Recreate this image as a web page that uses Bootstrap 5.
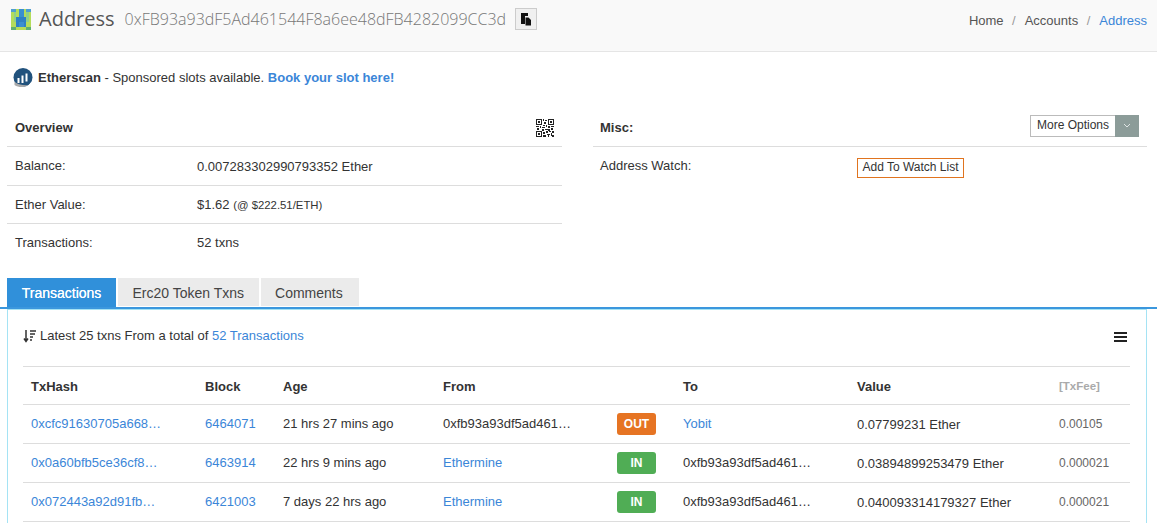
<!DOCTYPE html>
<html lang="en">
<head>
<meta charset="utf-8">
<title>Address</title>
<link href="https://cdn.jsdelivr.net/npm/bootstrap@5.3.0/dist/css/bootstrap.min.css" rel="stylesheet">
<style>
html,body{height:523px;overflow:hidden}
body{font-family:"Liberation Sans",Arial,sans-serif;font-size:13px;color:#333;background:#fff}
a{text-decoration:none;color:#3b86d8}
.top-band{height:52px;background:#f9f9f9;border-bottom:1px solid #e5e5e5;padding:0 10px 13px 11px}
.page-title{font-family:"Open Sans",sans-serif;font-size:20px;font-weight:400;color:#555;margin:0 0 0 8px;line-height:36px}
.addr-hash{font-family:"Open Sans",sans-serif;font-size:16px;font-weight:300;color:#777;margin-left:10px}
.copy-btn{width:22px;height:22px;border:1px solid #ccc;background:#f0f0f0;margin-left:9px;padding:0}
.crumbs{font-size:13px;color:#555;margin:3px 0 0}
.crumbs .sep{color:#999;margin:0 9px 0 8.5px}
.promo{padding:0 13px 4px;height:55px;font-size:13px}
.promo a{font-weight:700}
.promo-logo{margin-right:5px}
.ov-wrap{padding:0 10px 0 7px;gap:31px}
.ov-side{flex:0 0 555px}
.ov-side2{flex:1 1 0}
.ov-row{border-bottom:1px solid #ddd;padding:0 8px;height:38px}
.ov-row-first{height:39px}
.ov-val-low{padding-top:2px}
.ov-head{height:40px;padding-top:3px;font-weight:700;font-size:13px;color:#333}
.ov-side2 .ov-row{padding-left:7px}
.lab{width:182px;flex:none}
.lab2{width:257px;flex:none}
.more-group{height:22px;font-size:12px;font-weight:400;margin-bottom:5px}
.more-main{border:1px solid #bbb;border-right:0;background:#fff;padding:0 6px;height:22px;line-height:19px;color:#333}
.more-caret{width:24px;background:#8c9c99;height:22px}
.watch-row{height:38px;padding-left:7px}
.watch-btn{border:1px solid #e0741f;background:#fff;padding:0 4px;width:107px;height:20px;line-height:17px;font-size:12px;color:#333;margin-top:3px}
.tabs-row{padding:0 10px 0 7px;margin-top:16px;height:31px;border-bottom:2px solid #3b97dd;gap:2px;align-items:flex-start}
.tab-item{height:28px;line-height:30px;padding:0 14.5px;background:#ebebeb;color:#444;font-size:14px;display:block}
.tab-item.on{background:#3090da;color:#fff;text-shadow:0 0 .6px #fff;height:29px;width:109px;padding:0;text-align:center}
.tab-wide{width:98px}
.panel-box{margin:0 10px 0 7px;border:1px solid #a5e3f4;padding:0 15px;height:300px}
.panel-top{height:56px;padding-bottom:4px}
.menu-glyph{margin:2px 4px 0 0}
.tx-table{table-layout:fixed;width:1107px;margin:0;font-size:13px;color:#333}
.tx-table th,.tx-table td{padding:0 8px;height:39px;vertical-align:middle;border-bottom:1px solid #ddd;border-top:0;white-space:nowrap;overflow:hidden;background:transparent}
.tx-table thead th{height:38px;border-top:1px solid #ddd;font-weight:700;font-size:13px;padding-top:2px}
.tx-table td.val{padding-top:2px}
.fee{color:#666;font-size:12px}
.tx-table thead .fee-h{color:#aaa;font-size:11.5px}
.dir{display:inline-block;width:39px;height:22px;line-height:22px;border-radius:3px;text-align:center;color:#fff;font-weight:700;font-size:12px}
.dir-out{background:#e67423}
.dir-in{background:#50ad55}
</style>
</head>
<body>
<div class="top-band d-flex align-items-center justify-content-between">
  <div class="d-flex align-items-center">
    <svg width="20" height="21" viewBox="0 0 8 8" preserveAspectRatio="none" shape-rendering="crispEdges" aria-hidden="true"><rect width="8" height="8" fill="#b4dc5a"/><rect width="2" height="1" fill="#4f9fd0"/><rect x="6" width="2" height="1" fill="#4f9fd0"/><rect x="3" width="2" height="7" fill="#3a8fd0"/><rect x="1" y="1" width="1" height="4" fill="#8fd08a"/><rect x="6" y="1" width="1" height="4" fill="#8fd08a"/><rect x="2" y="3" width="4" height="2" fill="#2f80c4"/><rect x="2" y="5" width="1" height="2" fill="#2f80c4"/><rect x="5" y="5" width="1" height="2" fill="#2f80c4"/><rect x="0" y="7" width="2" height="1" fill="#5fb070"/><rect x="6" y="7" width="2" height="1" fill="#5fb070"/></svg>
    <h1 class="page-title">Address</h1>
    <span class="addr-hash">0xFB93a93dF5Ad461544F8a6ee48dFB4282099CC3d</span>
    <button class="copy-btn d-flex align-items-center justify-content-center" aria-label="Copy">
      <svg width="12" height="13" viewBox="0 0 12 13" aria-hidden="true"><path d="M1 0h7v3H5v8H1z" fill="#111"/><path d="M5.500 4.500h3l2.500 2.500v5.500H5.500z" fill="#111"/></svg>
    </button>
  </div>
  <div class="crumbs d-flex align-items-center"><span>Home</span><span class="sep">/</span><span>Accounts</span><span class="sep">/</span><a href="#">Address</a></div>
</div>
<div class="promo d-flex align-items-center">
  <svg class="promo-logo" width="20" height="20" viewBox="0 0 20 20" aria-hidden="true"><circle cx="10" cy="9.500" r="9.500" fill="#21527d"/><path d="M1.500 17c4 3 10 3 14 0l3-3v6H1z" fill="#fff"/><path d="M1.500 17c4 2.800 10 2.800 14 0-3 .5-9 .5-14-3z" fill="#aaa"/><path d="M5.500 15V10M9.500 15V7.500M13.500 13.500V5.500" stroke="#fff" stroke-width="2" fill="none"/></svg>
  <span><strong>Etherscan</strong> - Sponsored slots available. <a href="#">Book your slot here!</a></span>
</div>
<div class="ov-wrap d-flex">
  <div class="ov-side">
    <div class="ov-row ov-head d-flex align-items-center justify-content-between">
      <span>Overview</span>
      <svg width="18" height="18" viewBox="0 0 18 18" shape-rendering="crispEdges" aria-hidden="true"><path fill-rule="evenodd" d="M0 0h6v6H0zM1 1v4h4V1zM12 0h6v6h-6zM13 1v4h4V1zM0 12h6v6H0zM1 13v4h4v-4z" fill="#222"/><path d="M2 2h2v2H2zM14 2h2v2h-2zM2 14h2v2H2zM7 0h1v2H7zM9 1h2v1H9zM8 3h2v2H8zM7 6h2v1H7zM10 6h1v2h-1zM0 7h3v1H0zM4 7h1v2H4zM1 9h2v2H1zM6 8h3v1H6zM6 10h2v2H6zM9 10h3v1H9zM12 7h2v2h-2zM15 7h3v1h-3zM15 9h2v2h-2zM12 10h2v2h-2zM7 13h2v2H7zM10 12h2v2h-2zM13 12h2v1h-2zM16 12h2v2h-2zM7 16h3v2H7zM11 15h3v1h-3zM12 16h1v2h-1zM15 14h1v3h-1zM16 16h2v2h-2z" fill="#222"/></svg>
    </div>
    <div class="ov-row ov-row-first d-flex align-items-center"><span class="lab">Balance:</span><span class="ov-val-low">0.007283302990793352 Ether</span></div>
    <div class="ov-row d-flex align-items-center"><span class="lab">Ether Value:</span><span>$1.62 <small>(@ $222.51/ETH)</small></span></div>
    <div class="ov-row d-flex align-items-center border-0"><span class="lab">Transactions:</span><span>52 txns</span></div>
  </div>
  <div class="ov-side2">
    <div class="ov-row ov-head d-flex align-items-center justify-content-between pe-2">
      <span>Misc:</span>
      <span class="more-group d-flex"><span class="more-main">More Options</span><span class="more-caret d-flex align-items-center justify-content-center"><svg width="8" height="5" viewBox="0 0 8 5" aria-hidden="true"><path d="M1 1l3 3 3-3" fill="none" stroke="#dfe5e4"/></svg></span></span>
    </div>
    <div class="watch-row d-flex align-items-center"><span class="lab2">Address Watch:</span><button class="watch-btn">Add To Watch List</button></div>
  </div>
</div>
<div class="tabs-row d-flex">
  <a class="tab-item on" href="#">Transactions</a>
  <a class="tab-item" href="#">Erc20 Token Txns</a>
  <a class="tab-item tab-wide" href="#">Comments</a>
</div>
<div class="panel-box">
  <div class="panel-top d-flex align-items-center justify-content-between">
    <span class="d-flex align-items-center gap-1">
      <svg width="13" height="14" viewBox="0 0 13 14" aria-hidden="true"><path d="M3 1v11M1 9.500L3 12.500 5 9.500" fill="none" stroke="#333" stroke-width="1.500"/><path d="M7 2h6M7 5h5M7 8h3M7 11h2" stroke="#333" stroke-width="1.600"/></svg>
      <span>Latest 25 txns From a total of <a href="#">52 Transactions</a></span>
    </span>
    <svg class="menu-glyph" width="13" height="10" viewBox="0 0 13 10" aria-hidden="true"><path d="M0 1h13M0 5h13M0 9h13" stroke="#222" stroke-width="2"/></svg>
  </div>
  <table class="table tx-table">
    <colgroup><col style="width:174px"><col style="width:78px"><col style="width:160px"><col style="width:174px"><col style="width:66px"><col style="width:174px"><col style="width:202px"><col style="width:79px"></colgroup>
    <thead><tr><th>TxHash</th><th>Block</th><th>Age</th><th>From</th><th></th><th>To</th><th>Value</th><th class="fee-h">[TxFee]</th></tr></thead>
    <tbody>
      <tr><td><a href="#">0xcfc91630705a668…</a></td><td><a href="#">6464071</a></td><td>21 hrs 27 mins ago</td><td>0xfb93a93df5ad461…</td><td><span class="dir dir-out">OUT</span></td><td><a href="#">Yobit</a></td><td class="val">0.07799231 Ether</td><td class="fee">0.00105</td></tr>
      <tr><td><a href="#">0x0a60bfb5ce36cf8…</a></td><td><a href="#">6463914</a></td><td>22 hrs 9 mins ago</td><td><a href="#">Ethermine</a></td><td><span class="dir dir-in">IN</span></td><td>0xfb93a93df5ad461…</td><td class="val">0.03894899253479 Ether</td><td class="fee">0.000021</td></tr>
      <tr><td><a href="#">0x072443a92d91fb…</a></td><td><a href="#">6421003</a></td><td>7 days 22 hrs ago</td><td><a href="#">Ethermine</a></td><td><span class="dir dir-in">IN</span></td><td>0xfb93a93df5ad461…</td><td class="val">0.040093314179327 Ether</td><td class="fee">0.000021</td></tr>
    </tbody>
  </table>
</div>
<script src="https://cdn.jsdelivr.net/npm/bootstrap@5.3.0/dist/js/bootstrap.bundle.min.js"></script>
</body>
</html>
